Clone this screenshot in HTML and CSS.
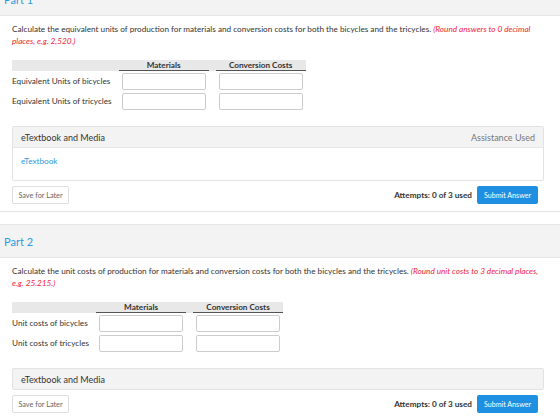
FILE: index.html
```html
<!DOCTYPE html>
<html lang="en">
<head>
  <meta charset="UTF-8">
  <title>Question</title>
  <link rel="stylesheet" href="styles.css">
</head>
<body>
  <div class="page">
    <div class="part">
      <div class="part-head">Part 1</div>
      <p class="question">Calculate the equivalent units of production for materials and conversion costs for both the bicycles and the tricycles. <em>(Round answers to 0 decimal places, e.g. 2,520.)</em></p>

      <table class="answers">
        <tr>
          <th class="label-col"></th>
          <th class="col"><span>Materials</span></th>
          <th class="col last"><span>Conversion Costs</span></th>
        </tr>
        <tr>
          <td class="label-col">Equivalent Units of bicycles</td>
          <td class="col"><input type="text"></td>
          <td class="col last"><input type="text"></td>
        </tr>
        <tr>
          <td class="label-col">Equivalent Units of tricycles</td>
          <td class="col"><input type="text"></td>
          <td class="col last"><input type="text"></td>
        </tr>
      </table>

      <div class="media">
        <div class="media-head">
          <span>eTextbook and Media</span>
          <span class="assist">Assistance Used</span>
        </div>
        <div class="media-body"><a href="#">eTextbook</a></div>
      </div>

      <div class="actions">
        <button class="save-btn">Save for Later</button>
        <span class="attempts">Attempts: 0 of 3 used</span>
        <button class="submit-btn">Submit Answer</button>
      </div>
    </div>

    <div class="part">
      <div class="part-head">Part 2</div>
      <p class="question">Calculate the unit costs of production for materials and conversion costs for both the bicycles and the tricycles. <em>(Round unit costs to 3 decimal places, e.g. 25.215.)</em></p>

      <table class="answers">
        <tr>
          <th class="label-col"></th>
          <th class="col"><span>Materials</span></th>
          <th class="col last"><span>Conversion Costs</span></th>
        </tr>
        <tr>
          <td class="label-col">Unit costs of bicycles</td>
          <td class="col"><input type="text"></td>
          <td class="col last"><input type="text"></td>
        </tr>
        <tr>
          <td class="label-col">Unit costs of tricycles</td>
          <td class="col"><input type="text"></td>
          <td class="col last"><input type="text"></td>
        </tr>
      </table>

      <div class="media">
        <div class="media-head">
          <span>eTextbook and Media</span>
        </div>
      </div>

      <div class="actions">
        <button class="save-btn">Save for Later</button>
        <span class="attempts">Attempts: 0 of 3 used</span>
        <button class="submit-btn">Submit Answer</button>
      </div>
    </div>
  </div>
</body>
</html>
```

FILE: styles.css
```css
body {
  margin: 0;
  font-family: Lato, "Open Sans", sans-serif;
  background-color: #fff;
  color: #333;
}
.page {
  margin-top: -18px;
}
.part {
  border-bottom: 1px solid #e2e2e2;
  padding-bottom: 7px;
  margin-bottom: 12px;
}
.part-head {
  height: 32px;
  line-height: 34px;
  padding-left: 4px;
  background-color: #f3f3f3;
  border-top: 1px solid #e6e6e6;
  border-bottom: 1px solid #e6e6e6;
  color: #2b9be0;
  font-size: 11px;
}
.question {
  margin: 7px 16px 0 12px;
  font-size: 8.2px;
  line-height: 12px;
}
.question em {
  color: #f31c37;
}
.answers {
  margin: 13px 0 0 12px;
  border-collapse: collapse;
  font-size: 8.2px;
}
.answers th {
  background-color: #e8e8e8;
  height: 11px;
  padding: 0;
  font-weight: bold;
  text-align: center;
  vertical-align: bottom;
}
.answers th span {
  display: block;
  border-bottom: 1.5px solid #555;
  line-height: 9px;
}
.answers .label-col {
  padding: 0 7px 0 0;
  text-align: left;
}
.answers .col {
  width: 90px;
  padding: 0 7px 0 0;
}
.answers .last {
  padding-right: 0;
}
.answers td {
  height: 20px;
}
.answers input {
  display: block;
  box-sizing: border-box;
  width: 84px;
  height: 17px;
  margin: 0 3px;
  border: 1px solid #ccc;
  border-radius: 2px;
}
.media {
  margin: 15px 16px 0 12px;
  border: 1px solid #e2e2e2;
  border-radius: 2px;
}
.media-head {
  display: flex;
  justify-content: space-between;
  align-items: center;
  height: 20px;
  padding: 0 8px;
  background-color: #f3f3f3;
  font-size: 9px;
}
.assist {
  color: #777;
}
.media-body {
  height: 33px;
  border-top: 1px solid #e6e6e6;
  padding: 8px 8px 0;
  box-sizing: border-box;
  font-size: 8.2px;
}
.media-body a {
  color: #2b9be0;
  text-decoration: none;
}
.actions {
  display: flex;
  align-items: center;
  margin: 5px 22px 0 12px;
}
.save-btn {
  height: 18px;
  width: 57px;
  padding: 0;
  background-color: #fff;
  border: 1px solid #ddd;
  border-radius: 2px;
  color: #666;
  font-family: Lato, sans-serif;
  font-size: 7.3px;
}
.attempts {
  margin-left: auto;
  margin-right: 5px;
  font-size: 8.2px;
  font-weight: bold;
}
.submit-btn {
  height: 18px;
  width: 61px;
  padding: 0;
  background-color: #1e8fe1;
  border: none;
  border-radius: 2px;
  color: #fff;
  font-family: Lato, sans-serif;
  font-size: 7.1px;
}
```
